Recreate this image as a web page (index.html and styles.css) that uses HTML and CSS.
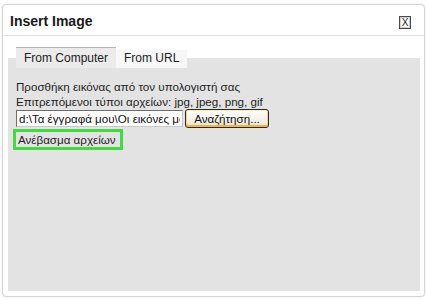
FILE: index.html
```
<!DOCTYPE html>
<html lang="el">
<head>
    <meta charset="UTF-8">
    <title>Insert Image</title>
    <link rel="stylesheet" href="styles.css">
</head>
<body>
    <div class="dialog">
        <div class="titlebar">
            <h1>Insert Image</h1>
            <span class="close">X</span>
        </div>

        <div class="panel">
            <!-- Tabs -->
            <div class="tabs">
                <div class="tab active">From Computer</div>
                <div class="tab">From URL</div>
            </div>

            <div class="content">
                <p>Προσθήκη εικόνας από τον υπολογιστή σας</p>
                <p>Επιτρεπόμενοι τύποι αρχείων: jpg, jpeg, png, gif</p>
                <div class="file-row">
                    <input type="text" class="file-path" value="d:\Τα έγγραφά μου\Οι εικόνες μου\photo.jpg">
                    <button class="browse">Αναζήτηση...</button>
                </div>
                <div class="upload">Ανέβασμα αρχείων</div>
            </div>
        </div>
    </div>
</body>
</html>
```

FILE: styles.css
```
* {
    margin: 0;
    padding: 0;
    box-sizing: border-box;
}

body {
    font-family: "Liberation Sans", Arial, sans-serif;
    background: #fff;
    color: #1e1e1e;
    width: 427px;
    height: 300px;
    overflow: hidden;
}

.dialog {
    margin: 4px 0 0 2px;
    width: 423px;
    height: 293px;
    background: #fff;
    border: 1px solid #d6d6d6;
    border-radius: 4px;
    box-shadow: 0 0 2px rgba(0, 0, 0, 0.12);
    display: flex;
    flex-direction: column;
}

.titlebar {
    height: 31px;
    border-bottom: 1px solid #e4e4e4;
    display: flex;
    align-items: center;
    justify-content: space-between;
    padding: 0 13px 0 7px;
}

h1 {
    font-size: 14px;
    font-weight: bold;
    color: #1a1a1a;
    margin-top: 1px;
}

.close {
    width: 12px;
    height: 13px;
    border: 1px solid #4a4a4a;
    box-shadow: inset 0 0 0 1px #cfcfcf;
    font-size: 10px;
    line-height: 11px;
    text-align: center;
    color: #222;
    margin-top: 4px;
}

.panel {
    flex: 1;
    margin: 11px 4px 5px 5px;
    /* tabs sit half above the grey area */
    background: linear-gradient(to bottom, #fff 11px, #e3e3e3 11px);
}

.tabs {
    display: flex;
    align-items: flex-end;
    height: 21px;
    padding-left: 8px;
}

.tab {
    font-size: 12px;
    height: 18px;
    line-height: 17px;
    padding: 0 8px;
    background: #f7f7f7;
    color: #222;
}

.tab.active {
    height: 21px;
    line-height: 21px;
    background: #ebebeb;
    border-top: 1px solid #b4b4b4;
}

.content {
    padding: 11px 8px 0 8px;
    font-size: 11.6px;
}

.content p {
    line-height: 15px;
}

.file-row {
    display: flex;
    align-items: flex-start;
}

.file-path {
    width: 167px;
    height: 17px;
    margin-top: 1px;
    border: 1px solid #6e6e6e;
    border-right-color: #c8c8c8;
    border-bottom-color: #c8c8c8;
    font-family: "Liberation Sans", Arial, sans-serif;
    font-size: 11.6px;
    padding: 0 2px;
    color: #111;
    background: #fff;
    outline: none;
}

.browse {
    margin-left: 2px;
    width: 84px;
    height: 19px;
    font-family: "Liberation Sans", Arial, sans-serif;
    font-size: 11.6px;
    color: #111;
    border: 1px solid #2a2a2a;
    border-radius: 3px;
    background: linear-gradient(to bottom, #ffffff, #f1efe6 70%, #e2ddc8);
    box-shadow: inset 0 -2px 0 #f5b43c, inset 0 1px 0 #ffeab0, inset 1px 0 0 #fbd270, inset -1px 0 0 #fbd270;
}

.upload {
    display: inline-block;
    white-space: nowrap;
    margin: 1px 0 0 -3px;
    border: 3px solid #3edc3e;
    padding: 0 0 0 2px;
    width: 110px;
    height: 21px;
    line-height: 15px;
}
```
